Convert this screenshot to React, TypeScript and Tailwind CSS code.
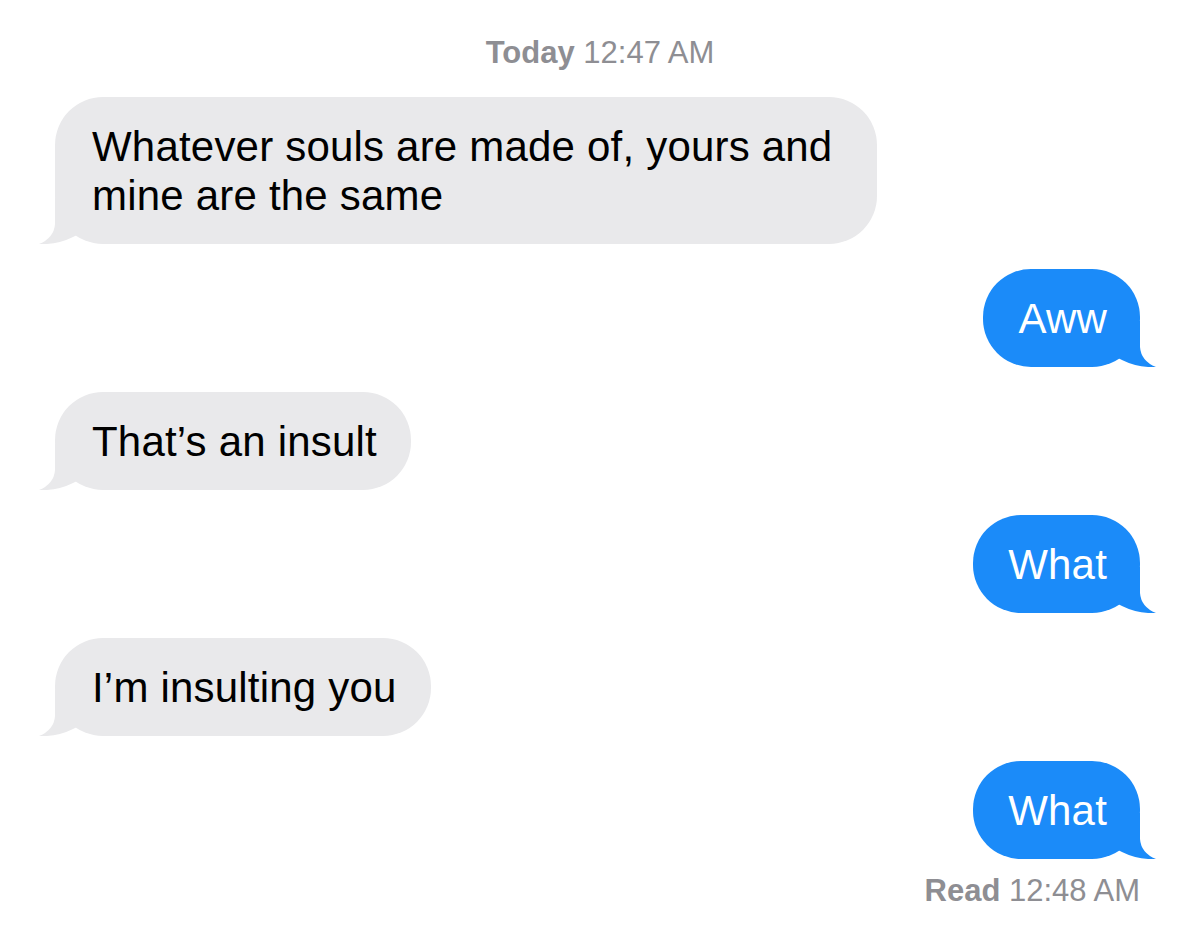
import type { ReactNode } from "react"

type Side = "in" | "out"

interface Message {
  id: number
  side: Side
  text: string
}

const messages: Message[] = [
  { id: 1, side: "in", text: "Whatever souls are made of, yours and mine are the same" },
  { id: 2, side: "out", text: "Aww" },
  { id: 3, side: "in", text: "That’s an insult" },
  { id: 4, side: "out", text: "What" },
  { id: 5, side: "in", text: "I’m insulting you" },
  { id: 6, side: "out", text: "What" },
]

function Tail({ side }: { side: Side }) {
  // hook that replaces the bottom corner on the sender's side
  if (side === "in") {
    return (
      <svg
        className="absolute bottom-0 left-[-16px]"
        width="40"
        height="46"
        viewBox="0 0 40 46"
      >
        <path d="M16 0 L16 26 Q15 40 0 46 Q18 47 34 39 L40 36 L40 0 Z" fill="#e9e9eb" />
      </svg>
    )
  }
  return (
    <svg
      className="absolute bottom-0 right-[-16px]"
      width="40"
      height="46"
      viewBox="0 0 40 46"
    >
      <path d="M24 0 L24 26 Q25 40 40 46 Q22 47 6 39 L0 36 L0 0 Z" fill="#1b8bf9" />
    </svg>
  )
}

function Bubble({ side, children }: { side: Side; children: ReactNode }) {
  const isIn = side === "in"
  return (
    <div
      className={
        isIn
          ? "relative max-w-[822px] rounded-[48px] bg-[#e9e9eb] py-[24.5px] pl-[37px] pr-[34px] text-[42px] leading-[49px] tracking-[0.2px] text-black"
          : "relative rounded-[48px] bg-[#1b8bf9] py-[24.5px] pl-[35px] pr-[33px] text-[42px] leading-[49px] tracking-[0.2px] text-white"
      }
    >
      <Tail side={side} />
      <span className="relative">{children}</span>
    </div>
  )
}

export default function App() {
  return (
    <div
      className="min-h-[935px] w-[1200px] bg-white pt-[35px]"
      style={{ fontFamily: "'Liberation Sans', Arial, sans-serif" }}
    >
      <div className="mb-[26px] text-center text-[31px] leading-[36px] text-[#8e8e93]">
        <span className="font-semibold">Today</span> 12:47 AM
      </div>

      <div className="flex flex-col gap-[25px]">
        {messages.map((m) => (
          <div
            key={m.id}
            className={m.side === "in" ? "flex justify-start pl-[55px]" : "flex justify-end pr-[60px]"}
          >
            <Bubble side={m.side}>{m.text}</Bubble>
          </div>
        ))}
      </div>

      <div className="mt-[14px] pr-[60px] text-right text-[31px] leading-[36px] text-[#8e8e93]">
        <span className="font-semibold">Read</span> 12:48 AM
      </div>
    </div>
  )
}
